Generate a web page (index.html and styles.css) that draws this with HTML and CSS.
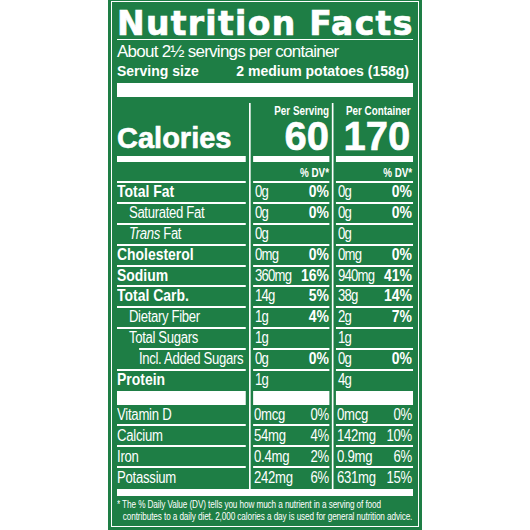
FILE: index.html
```html
<!DOCTYPE html>
<html lang="en">
<head>
    <meta charset="UTF-8">
    <meta name="viewport" content="width=device-width, initial-scale=1.0">
    <title>Nutrition Facts</title>
    <link rel="stylesheet" href="styles.css">
</head>
<body>
    <div class="label">
        <div class="inner">
            <h1 class="title">Nutrition Facts</h1>
            <p class="servings">About 2½ servings per container</p>
            <p class="size"><span>Serving size</span><span>2 medium potatoes (158g)</span></p>
            <div class="bar-thick"></div>

            <div class="facts sq">
                <!-- Calorias -->
                <div class="row hd">
                    <div class="cell cal"><span class="wide">Calories</span></div>
                    <div class="cell big"><span class="per">Per Serving</span><span class="num">60</span></div>
                    <div class="cell big c"><span class="per">Per Container</span><span class="num">170</span></div>
                </div>
                <div class="row dv">
                    <div class="cell"></div>
                    <div class="cell">% DV*</div>
                    <div class="cell c">% DV*</div>
                </div>

                <!-- Nutrientes -->
                <div class="row n">
                    <div class="cell name">Total Fat</div>
                    <div class="cell amt"><span>0g</span><b>0%</b></div>
                    <div class="cell amt c"><span>0g</span><b>0%</b></div>
                </div>
                <div class="row n">
                    <div class="cell name sub">Saturated Fat</div>
                    <div class="cell amt"><span>0g</span><b>0%</b></div>
                    <div class="cell amt c"><span>0g</span><b>0%</b></div>
                </div>
                <div class="row n">
                    <div class="cell name sub"><i>Trans</i> Fat</div>
                    <div class="cell amt"><span>0g</span></div>
                    <div class="cell amt c"><span>0g</span></div>
                </div>
                <div class="row n">
                    <div class="cell name">Cholesterol</div>
                    <div class="cell amt"><span>0mg</span><b>0%</b></div>
                    <div class="cell amt c"><span>0mg</span><b>0%</b></div>
                </div>
                <div class="row n">
                    <div class="cell name">Sodium</div>
                    <div class="cell amt"><span>360mg</span><b>16%</b></div>
                    <div class="cell amt c"><span>940mg</span><b>41%</b></div>
                </div>
                <div class="row n">
                    <div class="cell name">Total Carb.</div>
                    <div class="cell amt"><span>14g</span><b>5%</b></div>
                    <div class="cell amt c"><span>38g</span><b>14%</b></div>
                </div>
                <div class="row n">
                    <div class="cell name sub">Dietary Fiber</div>
                    <div class="cell amt"><span>1g</span><b>4%</b></div>
                    <div class="cell amt c"><span>2g</span><b>7%</b></div>
                </div>
                <div class="row n">
                    <div class="cell name sub ts">Total Sugars</div>
                    <div class="cell amt"><span>1g</span></div>
                    <div class="cell amt c"><span>1g</span></div>
                </div>
                <div class="row n">
                    <div class="cell name sub2">Incl. Added Sugars</div>
                    <div class="cell amt"><span>0g</span><b>0%</b></div>
                    <div class="cell amt c"><span>0g</span><b>0%</b></div>
                </div>
                <div class="row pr">
                    <div class="cell name">Protein</div>
                    <div class="cell amt"><span>1g</span></div>
                    <div class="cell amt c"><span>4g</span></div>
                </div>

                <!-- Vitaminas y minerales -->
                <div class="row vt">
                    <div class="cell">Vitamin D</div>
                    <div class="cell amt"><span>0mcg</span><span>0%</span></div>
                    <div class="cell amt c"><span>0mcg</span><span>0%</span></div>
                </div>
                <div class="row vt">
                    <div class="cell">Calcium</div>
                    <div class="cell amt"><span>54mg</span><span>4%</span></div>
                    <div class="cell amt c"><span>142mg</span><span>10%</span></div>
                </div>
                <div class="row vt">
                    <div class="cell">Iron</div>
                    <div class="cell amt"><span>0.4mg</span><span>2%</span></div>
                    <div class="cell amt c"><span>0.9mg</span><span>6%</span></div>
                </div>
                <div class="row vt last">
                    <div class="cell">Potassium</div>
                    <div class="cell amt"><span>242mg</span><span>6%</span></div>
                    <div class="cell amt c"><span>631mg</span><span>15%</span></div>
                </div>
            </div>

            <div class="bar-bottom"></div>
            <p class="note sq">* The % Daily Value (DV) tells you how much a nutrient in a serving of food<br>contributes to a daily diet. 2,000 calories a day is used for general nutrition advice.</p>
        </div>
    </div>
</body>
</html>
```

FILE: styles.css
```css
body {
    margin: 0;
    background-color: #ffffff;
    color: #ffffff;
    font-family: "Liberation Sans", Arial, sans-serif;
}
.label {
    width: 314px;
    height: 530px;
    margin: 0 auto;
    padding: 1px 3px 3px;
    box-sizing: border-box;
    background-color: #1e7e45;
}
.inner {
    height: 100%;
    box-sizing: border-box;
    border: 1px solid #ffffff;
    padding: 0 5px;
}
.title {
    margin: 0;
    padding-top: 7px;
    font: bold 33px/30px "DejaVu Sans", sans-serif;
    letter-spacing: 1.3px;
    white-space: nowrap;
    -webkit-text-stroke: 0.7px #ffffff;
    border-bottom: 1px solid #ffffff;
}
.servings {
    margin: 0;
    padding-top: 3px;
    font-size: 17px;
    line-height: 18px;
    letter-spacing: -0.75px;
    white-space: nowrap;
}
.size {
    display: flex;
    justify-content: space-between;
    margin: 2px 0 0;
    padding-right: 4px;
    font-size: 14px;
    font-weight: bold;
    line-height: 16px;
}
.bar-thick {
    height: 14px;
    margin-top: 4px;
    background-color: #ffffff;
}

/* letra condensada: se maqueta a 1/0.82 y se encoge */
.sq {
    width: calc(100% / 0.82);
    transform: scaleX(0.82);
    transform-origin: left top;
}

/* tabla */
.facts {
    display: grid;
    grid-template-columns: 157.3px 92.7px 93.9px;
    column-gap: 8.54px;
    background:
        linear-gradient(#ffffff, #ffffff) 161px 6px / 2.4px calc(100% - 6px) no-repeat,
        linear-gradient(#ffffff, #ffffff) 262.2px 6px / 2.4px calc(100% - 6px) no-repeat;
}
.row {
    display: contents;
}
.cell {
    box-sizing: border-box;
    border-bottom: 2px solid #ffffff;
    white-space: nowrap;
}
.hd .cell {
    height: 65px;
    padding-bottom: 3px;
    border-bottom-width: 6px;
    display: flex;
    flex-direction: column;
    justify-content: flex-end;
    align-items: flex-end;
}
.hd .cal {
    align-items: flex-start;
    font-size: 29px;
    font-weight: bold;
    line-height: 29px;
}
.wide {
    transform: scaleX(1.22);
    transform-origin: left;
    -webkit-text-stroke: 0.6px #ffffff;
}
.per {
    margin-bottom: 2px;
    font-size: 12px;
    font-weight: bold;
    line-height: 12px;
}
.num {
    font-size: 40px;
    font-weight: bold;
    line-height: 34px;
    transform: scaleX(1.22);
    transform-origin: right;
    -webkit-text-stroke: 0.6px #ffffff;
}
.big.c .per, .big.c .num {
    margin-right: 3px;
}
.dv .cell {
    height: 21px;
    padding-top: 4px;
    font-size: 12px;
    font-weight: bold;
    line-height: 15px;
    text-align: right;
}
.dv .c {
    padding-right: 1px;
}
.n .cell, .pr .cell {
    height: 20.9px;
    line-height: 18.9px;
}
.pr .cell {
    height: 34px;
    border-bottom-width: 14px;
}
.name {
    font-size: 17px;
    font-weight: bold;
}
.name.sub, .name.sub2 {
    padding-left: 14.6px;
    font-size: 16px;
    font-weight: normal;
    letter-spacing: -0.4px;
}
.name.sub2 {
    padding-left: 26.8px;
}
.name.ts {
    border-bottom-width: 0;
    background: linear-gradient(#ffffff, #ffffff) 26.8px 100% / calc(100% - 26.8px) 2px no-repeat;
}
.amt {
    display: flex;
    justify-content: space-between;
    align-items: baseline;
    padding-left: 2.4px;
    font-size: 16px;
    letter-spacing: -0.9px;
}
.amt b {
    font-size: 17px;
    letter-spacing: 0;
}
.amt.c {
    padding-right: 1.2px;
}
.vt .cell {
    height: 21px;
    padding-top: 1px;
    font-size: 16px;
    line-height: 18px;
    letter-spacing: -0.3px;
}
.vt .amt {
    padding-left: 1.2px;
}
.vt.last .cell {
    border-bottom-width: 0;
}
.bar-bottom {
    height: 7px;
    background-color: #ffffff;
}
.note {
    margin: 0;
    padding: 3px 0 0 7px;
    box-sizing: border-box;
    text-indent: -7px;
    font-size: 10px;
    line-height: 11.7px;
    letter-spacing: -0.12px;
    white-space: nowrap;
}
```
